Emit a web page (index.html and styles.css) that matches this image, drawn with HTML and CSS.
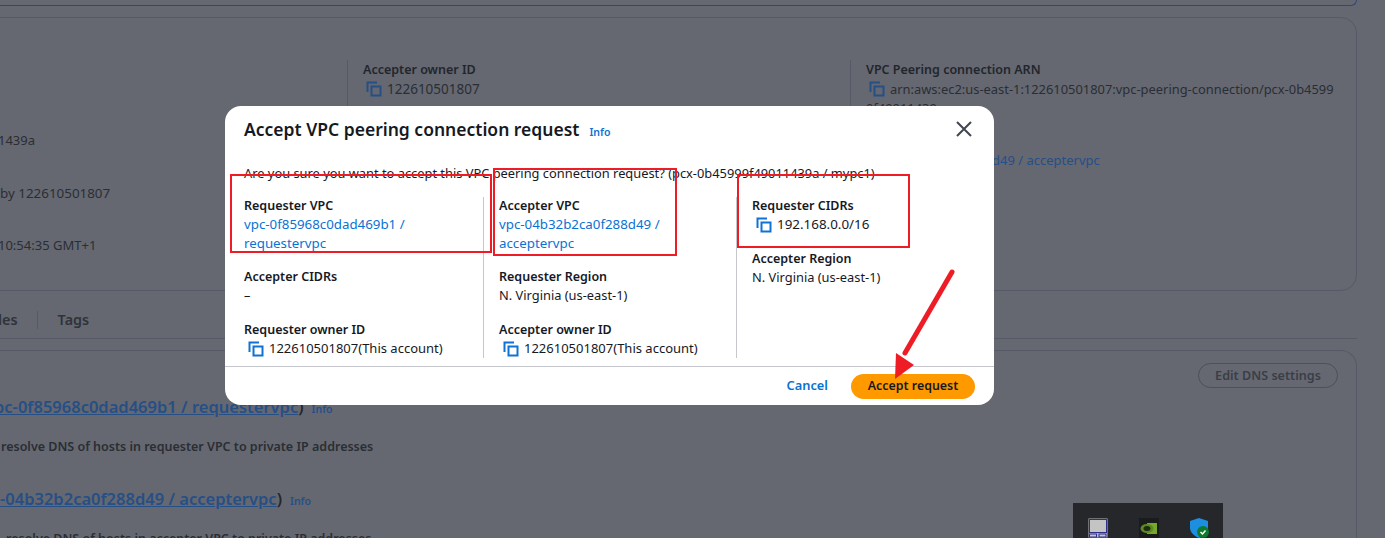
FILE: index.html
```html
<!DOCTYPE html>
<html lang="en">
<head>
  <meta charset="UTF-8">
  <title>Accept VPC peering connection request</title>
  <link rel="stylesheet" href="styles.css">
</head>
<body>

<svg width="0" height="0" class="defs">
  <symbol id="copy" viewBox="0 0 16 16">
    <path d="M1.5 11V1.5H11" fill="none" stroke="currentColor" stroke-width="2"/>
    <rect x="5.5" y="5.5" width="9" height="9" fill="none" stroke="currentColor" stroke-width="2"/>
  </symbol>
</svg>

<div class="page">
  <div class="top-card"></div>

  <section class="card details">
    <div class="col col-first">
      <div class="val val-first">1439a</div>
      <div class="val val-by">by 122610501807</div>
      <div class="val val-time">10:54:35 GMT+1</div>
    </div>
    <div class="col col-mid">
      <div class="lbl">Accepter owner ID</div>
      <div class="val val-owner"><svg class="copy-ic"><use href="#copy"/></svg>122610501807</div>
    </div>
    <div class="col col-last">
      <div class="lbl">VPC Peering connection ARN</div>
      <div class="val arn"><svg class="copy-ic"><use href="#copy"/></svg>arn:aws:ec2:us-east-1:122610501807:vpc-peering-connection/pcx-0b4599<br>9f49011439a</div>
      <a class="link">vpc-04b32b2ca0f288d49 / acceptervpc</a>
    </div>
  </section>

  <nav class="tabs">
    <span class="tab">les</span>
    <span class="tab-sep"></span>
    <span class="tab">Tags</span>
  </nav>

  <section class="card dns">
    <button class="btn-edit">Edit DNS settings</button>
    <h3 class="dns-head dns-req"><a class="under">pc-0f85968c0dad469b1 / requestervpc</a>)<span class="info-dim">Info</span></h3>
    <p class="dns-text">resolve DNS of hosts in requester VPC to private IP addresses</p>
    <h3 class="dns-head dns-acc"><a class="under">-04b32b2ca0f288d49 / acceptervpc</a>)<span class="info-dim">Info</span></h3>
    <p class="dns-text dns-text-2">resolve DNS of hosts in accepter VPC to private IP addresses</p>
  </section>
</div>

<div class="modal">
  <header class="modal-head">
    <h2>Accept VPC peering connection request</h2>
    <a class="info">Info</a>
    <svg class="close" width="18" height="18" viewBox="0 0 18 18"><path d="M2 2l14 14M16 2L2 16" stroke="#414750" stroke-width="2" fill="none"/></svg>
  </header>
  <p class="question">Are you sure you want to accept this VPC peering connection request? (pcx-0b45999f49011439a / mypc1)</p>
  <div class="grid">
    <div class="m-col">
      <div class="m-field">
        <div class="m-lbl">Requester VPC</div>
        <a class="m-link">vpc-0f85968c0dad469b1 / requestervpc</a>
      </div>
      <div class="m-field">
        <div class="m-lbl">Accepter CIDRs</div>
        <div>–</div>
      </div>
      <div class="m-field">
        <div class="m-lbl">Requester owner ID</div>
        <div class="m-copy"><svg class="copy-ic"><use href="#copy"/></svg>122610501807(This account)</div>
      </div>
    </div>
    <div class="m-col">
      <div class="m-field">
        <div class="m-lbl">Accepter VPC</div>
        <a class="m-link">vpc-04b32b2ca0f288d49 / acceptervpc</a>
      </div>
      <div class="m-field">
        <div class="m-lbl">Requester Region</div>
        <div>N. Virginia (us-east-1)</div>
      </div>
      <div class="m-field">
        <div class="m-lbl">Accepter owner ID</div>
        <div class="m-copy"><svg class="copy-ic"><use href="#copy"/></svg>122610501807(This account)</div>
      </div>
    </div>
    <div class="m-col m-col-last">
      <div class="m-field m-field-short">
        <div class="m-lbl">Requester CIDRs</div>
        <div class="m-copy m-cidr"><svg class="copy-ic"><use href="#copy"/></svg>192.168.0.0/16</div>
      </div>
      <div class="m-field">
        <div class="m-lbl">Accepter Region</div>
        <div>N. Virginia (us-east-1)</div>
      </div>
    </div>
  </div>
  <footer class="modal-foot">
    <a class="cancel">Cancel</a>
    <button class="accept">Accept request</button>
  </footer>
</div>

<!-- annotations drawn over the screenshot -->
<div class="mark mark-1"></div>
<div class="mark mark-2"></div>
<div class="mark mark-3"></div>
<svg class="arrow" width="80" height="125" viewBox="0 0 80 125">
  <path d="M67 7L20 88" stroke="#ee1c25" stroke-width="5" stroke-linecap="round" fill="none"/>
  <path d="M10 114L11 88L29 100Z" fill="#ee1c25"/>
</svg>

<div class="tray">
  <svg width="20" height="20" viewBox="0 0 20 20">
    <rect x="0.5" y="0.5" width="19" height="19" fill="#b9bbc0"/>
    <rect x="1.5" y="1.5" width="17" height="13" fill="#c4c4c4" stroke="#2e2f8a"/>
    <rect x="1.5" y="16" width="7" height="3" fill="#c4c4c4" stroke="#2e2f8a"/>
    <rect x="11" y="16" width="7" height="3" fill="#c4c4c4" stroke="#2e2f8a"/>
  </svg>
  <svg width="20" height="20" viewBox="0 0 20 20">
    <rect x="0" y="0" width="20" height="20" fill="#1a1b1d"/>
    <rect x="8" y="5" width="10" height="11" fill="#76a82a"/>
    <ellipse cx="8" cy="10.5" rx="6.5" ry="4.5" fill="#5c8a22"/>
    <ellipse cx="8" cy="10.5" rx="3.5" ry="2.5" fill="#1f2a10"/>
  </svg>
  <svg width="20" height="20" viewBox="0 0 20 20">
    <path d="M9 0L18 3V10C18 14 14 18 9 20C4 18 0 14 0 10V3Z" fill="#1c8fe0"/>
    <circle cx="13" cy="14" r="6" fill="#0e7a2d"/>
    <path d="M10.5 14l2 2 3-3.5" stroke="#fff" stroke-width="1.5" fill="none"/>
  </svg>
</div>

</body>
</html>
```

FILE: styles.css
```css
html, body { margin: 0; padding: 0; height: 538px; overflow: hidden; }
body { background: #656871; font-family: "Noto Sans", "Open Sans", sans-serif; font-size: 12.85px; color: #22262c; position: relative; line-height: 19px; }
.defs { position: absolute; }
a { text-decoration: none; }

/* page behind the dialog, its left part is outside the window */
.page { margin-left: -150px; width: 1507px; }
.top-card { height: 5px; border: 1px solid #2c4a78; border-top: none; border-radius: 0 0 12px 12px; }
.card { border: 1px solid #565a66; border-radius: 16px; }

.details { margin-top: 11px; height: 274px; display: grid; grid-template-columns: 496px 503px 1fr; box-sizing: border-box; padding-top: 42px; }
.col { padding: 0 15px; border-left: 1px solid #565a66; height: 232px; }
.col-first { border-left: none; padding-left: 149px; }
.lbl { font-weight: 600; font-size: 12.5px; color: #22262c; }
.val { color: #2a2e34; font-size: 13px; white-space: nowrap; }
.arn { font-size: 12.9px; }
.val-first { padding-top: 71px; margin-left: -2px; }
.val-by { padding-top: 34px; font-size: 13.4px; }
.val-time { padding-top: 33px; margin-left: -2px; }
.val-owner { font-size: 13.5px; }
.val .copy-ic { color: #264f86; vertical-align: -3px; margin-left: 3px; }
.copy-ic { width: 16px; height: 16px; margin-right: 5px; flex: none; color: #0f72d6; margin-top: 2px; }
.link { display: block; color: #264f86; margin-top: 33px; white-space: nowrap; font-size: 13px; }

.tabs { display: flex; align-items: center; height: 48px; box-sizing: border-box; border-bottom: 1px solid #565a66; font-size: 14.4px; font-weight: 600; color: #2f333a; padding: 10px 0 0 148px; }
.tab-sep { width: 1px; height: 18px; background: #565a66; margin: 0 20px 0 19px; }

.dns { margin-top: 11px; height: 300px; padding-left: 150px; position: relative; border-bottom: none; box-sizing: border-box; }
.btn-edit { position: absolute; right: 18px; top: 12px; width: 140px; height: 25px; border: 1px solid #4c505a; border-radius: 13px; background: none; font: 600 12.6px "Noto Sans", sans-serif; color: #3a3e47; padding: 0; }
.dns-head { margin: 0; font-size: 16.5px; font-weight: 600; line-height: 22px; white-space: nowrap; color: #22262c; }
.dns-req { padding-top: 45px; margin-left: -7px; }
.dns-acc { padding-top: 32px; margin-left: -1px; }
.under { color: #264f86; text-decoration: underline; }
.info-dim { font-size: 10.5px; color: #264f86; margin-left: 8px; font-weight: 600; }
.dns-text { margin: 17px 0 0 0; font-weight: 600; font-size: 12.5px; color: #2a2e34; white-space: nowrap; }
.dns-text-2 { margin-left: 5px; }

/* dialog */
.modal { position: absolute; left: 225px; top: 106px; width: 769px; height: 299px; background: #fff; border-radius: 16px; color: #16191f; }
.modal-head { display: flex; align-items: center; height: 48px; padding-left: 19px; position: relative; }
.modal-head h2 { margin: -2px 0 0; font-size: 17.5px; font-weight: 600; line-height: 48px; white-space: nowrap; }
.info { font-size: 10.5px; font-weight: 600; color: #0972d3; margin-left: 10px; margin-top: 4px; }
.close { position: absolute; right: 21px; top: 14px; }
.question { margin: 0; padding: 10px 0 0 19px; height: 23px; white-space: nowrap; }
.grid { display: grid; grid-template-columns: 259px 253px 1fr; grid-template-rows: 161px; margin-top: 10px; }
.m-col { padding: 0 0 0 19px; border-right: 1px solid #c6c6cd; }
.m-col + .m-col { padding-left: 15px; }
.m-col-last { border-right: none; padding-left: 16px; }
.m-field { height: 71px; width: 214px; }
.m-field + .m-field { height: 53px; }
.m-col .m-field:first-child { margin-top: -1px; }
.m-field-short { height: 53px; }
.m-lbl { font-weight: 600; font-size: 12.5px; }
.m-link { color: #0972d3; display: block; font-size: 13.3px; }
.m-copy { display: flex; white-space: nowrap; padding-left: 4px; font-size: 13px; }
.m-cidr { font-size: 13.4px; }
.modal-foot { border-top: 1px solid #c6c6cd; margin-top: 8px; display: flex; justify-content: flex-end; align-items: center; gap: 23px; padding: 7px 19px 0 0; }
.cancel { color: #0972d3; font-weight: 600; margin-top: -2px; }
.accept { width: 124px; height: 25px; border: none; border-radius: 13px; background: #ff9900; color: #16191f; font: 600 12.4px "Noto Sans", sans-serif; padding: 0 0 2px; }

/* red annotations */
.mark { position: absolute; border: 2px solid #ee1c25; box-sizing: border-box; }
.mark-1 { left: 230px; top: 174px; width: 262px; height: 79px; }
.mark-2 { left: 493px; top: 168px; width: 184px; height: 88px; }
.mark-3 { left: 737px; top: 174px; width: 173px; height: 74px; }
.arrow { position: absolute; left: 885px; top: 265px; }

.tray { position: absolute; left: 1073px; top: 503px; width: 150px; height: 35px; background: #25272b; display: flex; gap: 31px; padding: 15px 0 0 15px; box-sizing: border-box; overflow: hidden; }
.tray svg { flex: none; }
```
